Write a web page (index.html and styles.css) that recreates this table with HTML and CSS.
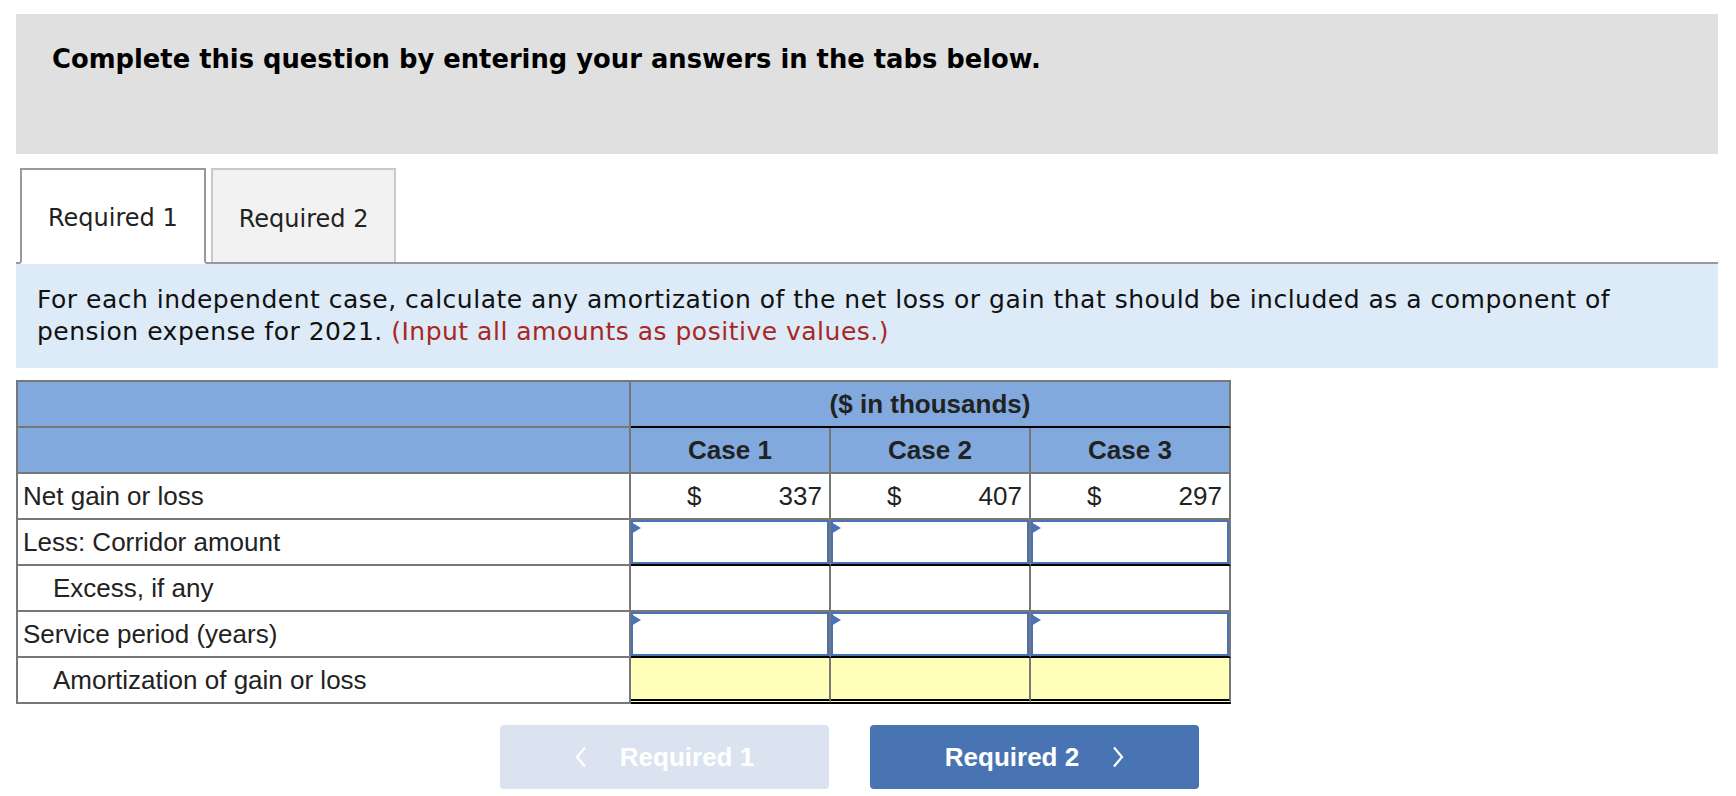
FILE: index.html
```html
<!DOCTYPE html>
<html lang="en">
<head>
<meta charset="utf-8">
<title>Required 1</title>
<link rel="stylesheet" href="styles.css">
</head>
<body>
<div class="page">
  <div class="prompt">
    <p class="prompt-text">Complete this question by entering your answers in the tabs below.</p>
  </div>

  <div class="tabs">
    <div class="tab tab-active">Required 1</div>
    <div class="tab">Required 2</div>
  </div>

  <div class="instructions">
    For each independent case, calculate any amortization of the net loss or gain that should be included as a component of pension expense for 2021. <span class="note">(Input all amounts as positive values.)</span>
  </div>

  <div class="sheet">
    <div class="cell head"></div>
    <div class="cell head span3 rule-black">($ in thousands)</div>

    <div class="cell head"></div>
    <div class="cell head case">Case 1</div>
    <div class="cell head case">Case 2</div>
    <div class="cell head case">Case 3</div>

    <div class="cell label">Net gain or loss</div>
    <div class="cell amt"><span class="cur">$</span><span class="val">337</span></div>
    <div class="cell amt"><span class="cur">$</span><span class="val">407</span></div>
    <div class="cell amt"><span class="cur">$</span><span class="val">297</span></div>

    <div class="cell label">Less: Corridor amount</div>
    <div class="cell entry rule-black"><div class="field"><span class="flag"></span></div></div>
    <div class="cell entry rule-black"><div class="field"><span class="flag"></span></div></div>
    <div class="cell entry rule-black"><div class="field"><span class="flag"></span></div></div>

    <div class="cell label indent">Excess, if any</div>
    <div class="cell"></div>
    <div class="cell"></div>
    <div class="cell"></div>

    <div class="cell label">Service period (years)</div>
    <div class="cell entry rule-black"><div class="field"><span class="flag"></span></div></div>
    <div class="cell entry rule-black"><div class="field"><span class="flag"></span></div></div>
    <div class="cell entry rule-black"><div class="field"><span class="flag"></span></div></div>

    <div class="cell label indent">Amortization of gain or loss</div>
    <div class="cell total"></div>
    <div class="cell total"></div>
    <div class="cell total"></div>
  </div>

  <div class="nav">
    <button class="nav-btn nav-prev" type="button">
      <svg class="chev" width="12" height="22" viewBox="0 0 12 22"><polyline points="10,1.5 2,11 10,20.5" fill="none" stroke="#ffffff" stroke-width="2.2"/></svg>
      <span>Required 1</span>
    </button>
    <button class="nav-btn nav-next" type="button">
      <span>Required 2</span>
      <svg class="chev" width="12" height="22" viewBox="0 0 12 22"><polyline points="2,1.5 10,11 2,20.5" fill="none" stroke="#ffffff" stroke-width="2.2"/></svg>
    </button>
  </div>
</div>
</body>
</html>
```

FILE: styles.css
```css
html, body {
  margin: 0;
  padding: 0;
  background: #ffffff;
}

.page {
  padding: 14px 18px 0 16px;
  font-family: "DejaVu Sans", Verdana, sans-serif;
  color: #222222;
}

.prompt {
  background: #e0e0e0;
  height: 140px;
  box-sizing: border-box;
  padding: 30px 36px 0 36px;
}

.prompt-text {
  margin: 0;
  font-size: 25.8px;
  line-height: 30px;
  font-weight: bold;
  color: #000000;
}

.tabs {
  display: flex;
  align-items: flex-end;
  gap: 5px;
  margin-top: 14px;
  padding-left: 4px;
  border-bottom: 2px solid #999999;
}

.tab {
  box-sizing: border-box;
  height: 94px;
  padding: 6px 26px 0 26px;
  display: flex;
  align-items: center;
  font-size: 24px;
  color: #222222;
  background: #f2f2f2;
  border: 2px solid #c9c9c9;
  border-bottom: none;
}

.tab-active {
  height: 96px;
  margin-bottom: -2px;
  background: #ffffff;
  border: 2px solid #999999;
  border-bottom: 2px solid #ffffff;
  padding: 4px 26px 0 26px;
}

.instructions {
  background: #ddeaf7;
  height: 104px;
  box-sizing: border-box;
  padding: 20px 22px 0 21px;
  font-size: 25px;
  letter-spacing: 0.5px;
  line-height: 32px;
  color: #111111;
}

.note {
  color: #a8281f;
}

.sheet {
  margin-top: 12px;
  display: grid;
  grid-template-columns: 613px repeat(3, 200px);
  grid-auto-rows: 46px;
  width: max-content;
  border-top: 2px solid #777777;
  border-left: 2px solid #777777;
  font-family: "Liberation Sans", Arial, sans-serif;
  font-size: 26px;
  color: #222222;
}

.cell {
  box-sizing: border-box;
  border-right: 2px solid #777777;
  border-bottom: 2px solid #777777;
  display: flex;
  align-items: center;
  min-width: 0;
}

.head {
  background: #81a9de;
  font-weight: bold;
  justify-content: center;
}

.span3 {
  grid-column: span 3;
}

.rule-black {
  border-bottom-color: #000000;
}

.label {
  padding-left: 5px;
}

.indent {
  padding-left: 35px;
}

.amt {
  padding: 0 7px 0 56px;
  justify-content: space-between;
}

.entry {
  align-items: stretch;
}

.field {
  position: relative;
  flex: 1;
  border: 2px solid #4a73b7;
  background: #ffffff;
}

.flag {
  position: absolute;
  top: 0;
  left: -2px;
  width: 0;
  height: 0;
  border-top: 6px solid transparent;
  border-bottom: 6px solid transparent;
  border-left: 10px solid #4a73b7;
}

.total {
  background: #ffffb9;
  border-bottom: 5px double #000000;
}

.nav {
  display: flex;
  gap: 41px;
  margin-top: 21px;
  padding-left: 484px;
}

.nav-btn {
  width: 329px;
  height: 64px;
  border: none;
  border-radius: 4px;
  display: flex;
  align-items: center;
  justify-content: center;
  gap: 33px;
  font-family: "Liberation Sans", Arial, sans-serif;
  font-size: 26px;
  font-weight: bold;
  color: #ffffff;
  padding: 0;
}

.nav-prev {
  background: #dae3ef;
}

.nav-next {
  background: #4874b3;
}

.chev {
  display: block;
}
```
